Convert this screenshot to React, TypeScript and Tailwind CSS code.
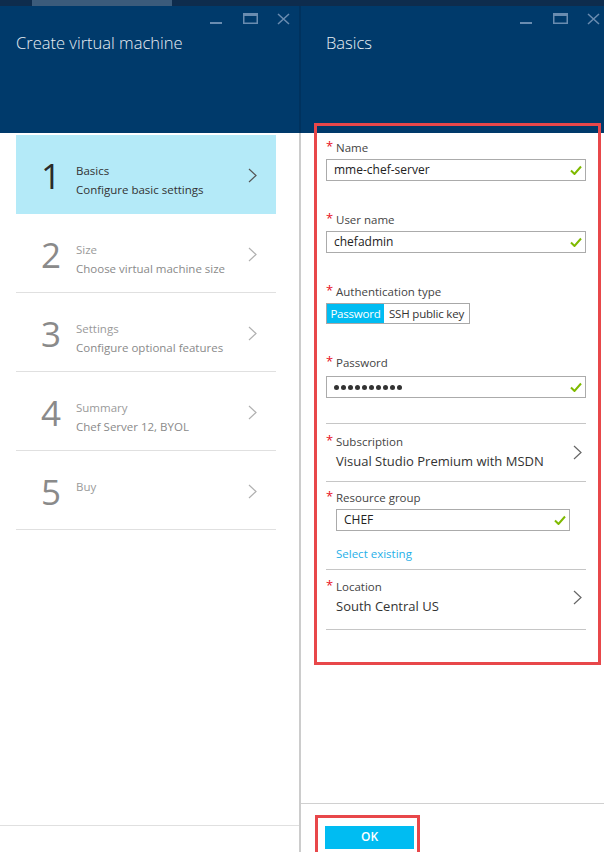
import React from 'react'

const steps = [
  { n: '1', title: 'Basics', sub: 'Configure basic settings', active: true },
  { n: '2', title: 'Size', sub: 'Choose virtual machine size' },
  { n: '3', title: 'Settings', sub: 'Configure optional features' },
  { n: '4', title: 'Summary', sub: 'Chef Server 12, BYOL' },
  { n: '5', title: 'Buy', sub: '' },
]

function WindowControls() {
  return (
    <svg width="80" height="12" viewBox="0 0 80 12" fill="none" stroke="#6a8cb0">
      <line x1="0" y1="10" x2="12" y2="10" strokeWidth="2" />
      <rect x="33.75" y="0.75" width="13.5" height="9.5" strokeWidth="1.5" />
      <line x1="33" y1="1.5" x2="48" y2="1.5" strokeWidth="3" />
      <path d="M68 1 L79 11 M79 1 L68 11" strokeWidth="1.5" />
    </svg>
  )
}

function Chevron({ color }: { color: string }) {
  return (
    <svg width="9" height="15" viewBox="0 0 9 15">
      <path d="M1 1 L8 7.5 L1 14" fill="none" stroke={color} strokeWidth="1.2" />
    </svg>
  )
}

function Check() {
  return (
    <svg width="12" height="10" viewBox="0 0 12 10">
      <path d="M1 5.5 L4.5 9 L11 1.5" fill="none" stroke="#7fba00" strokeWidth="2" />
    </svg>
  )
}

function Label({ text }: { text: string }) {
  return (
    <div className="flex items-start h-[16px]">
      <span className="w-[10px] text-[13px] leading-[13px] text-[#e81123]">*</span>
      <span className="text-[11.5px] leading-[16px] text-[#444]">{text}</span>
    </div>
  )
}

function Field({ children }: { children: React.ReactNode }) {
  return (
    <div className="h-[22px] border border-[#ababab] flex items-center justify-between pl-[7px] pr-[3px] text-[12px] text-[#222]">
      {children}
      <Check />
    </div>
  )
}

export default function App() {
  return (
    <div className="w-[604px] h-[852px] overflow-hidden bg-white flex flex-col font-['Open_Sans','Noto_Sans',sans-serif]">
      <div className="h-[6px] bg-[#0e2c4d] flex shrink-0">
        <div className="ml-[32px] w-[140px] bg-[#3b5b7b]" />
      </div>
      <div className="flex flex-1 min-h-0">
        {/* left blade */}
        <section className="w-[299px] flex flex-col">
          <header className="h-[127px] bg-[#003a6b] flex flex-col">
            <div className="flex justify-end pt-[7px] pr-[9px]">
              <WindowControls />
            </div>
            <h1 className="pl-[16px] mt-[6px] text-[16.5px] font-light leading-[24px] text-[#e8eef4]">
              Create virtual machine
            </h1>
          </header>
          <div className="flex-1 pl-[16px] pr-[23px] pt-[2px]">
            {steps.map((s) => (
              <div
                key={s.n}
                className={`h-[79px] flex items-start border-b ${s.active ? 'bg-[#b4eaf8] border-[#b4eaf8]' : 'border-[#e0e0e0]'}`}
              >
                <span
                  className={`w-[60px] pl-[25px] pt-[23px] text-[35px] leading-[36px] ${s.active ? 'text-[#2a2a2a]' : 'text-[#8a8a8a]'}`}
                >
                  {s.n}
                </span>
                <div className="flex-1 pt-[26px] text-[11.5px] leading-[19px]">
                  <div className={s.active ? 'text-[#333]' : 'text-[#9a9a9a]'}>{s.title}</div>
                  <div className={s.active ? 'text-[#333]' : 'text-[#8a8a8a]'}>{s.sub}</div>
                </div>
                <div className="pt-[33px] pr-[19px]">
                  <Chevron color={s.active ? '#555' : '#b0b0b0'} />
                </div>
              </div>
            ))}
          </div>
          <div className="h-[27px] border-t border-[#e0e0e0]" />
        </section>

        <div className="w-[2px] flex flex-col">
          <div className="h-[127px] bg-[#00325e]" />
          <div className="flex-1 bg-[#cccccc]" />
        </div>

        {/* right blade */}
        <section className="flex-1 flex flex-col relative">
          <header className="h-[127px] bg-[#003a6b] flex flex-col">
            <div className="flex justify-end pt-[7px] pr-[4px]">
              <WindowControls />
            </div>
            <h2 className="pl-[25px] mt-[6px] text-[16.5px] font-light leading-[24px] text-[#e8eef4]">Basics</h2>
          </header>

          <div className="flex-1 pl-[25px] pr-[18px] pt-[7px]">
            <Label text="Name" />
            <div className="mt-[3px]">
              <Field>mme-chef-server</Field>
            </div>

            <div className="mt-[31px]">
              <Label text="User name" />
            </div>
            <div className="mt-[3px]">
              <Field>chefadmin</Field>
            </div>

            <div className="mt-[31px]">
              <Label text="Authentication type" />
            </div>
            <div className="mt-[3px] flex h-[21px] w-[144px] border border-[#a8a8a8] text-[11.5px] tracking-[-0.2px]">
              <span className="w-[57px] bg-[#00bcf2] text-white flex items-center justify-center">Password</span>
              <span className="flex-1 text-[#333] flex items-center justify-center">SSH public key</span>
            </div>

            <div className="mt-[31px]">
              <Label text="Password" />
            </div>
            <div className="mt-[5px]">
              <Field>
                <span className="flex gap-[2px]">
                  {Array.from({ length: 10 }).map((_, i) => (
                    <span key={i} className="w-[5px] h-[5px] rounded-full bg-[#333]" />
                  ))}
                </span>
              </Field>
            </div>

            <div className="mt-[25px] border-t border-[#c6c6c6] pt-[10px] pb-[10px] flex items-center justify-between">
              <div>
                <Label text="Subscription" />
                <div className="pl-[10px] text-[13px] leading-[20px] text-[#333] mt-[1px]">
                  Visual Studio Premium with MSDN
                </div>
              </div>
              <div className="pr-[4px]">
                <Chevron color="#666" />
              </div>
            </div>

            <div className="border-t border-[#c6c6c6] pt-[8px] pb-[7px]">
              <Label text="Resource group" />
              <div className="mt-[3px] ml-[10px] w-[234px]">
                <Field>CHEF</Field>
              </div>
              <div className="mt-[15px] ml-[10px] text-[11.5px] leading-[16px] text-[#1fb0e8]">Select existing</div>
            </div>

            <div className="border-t border-[#c6c6c6] pt-[9px] pb-[13px] flex items-center justify-between">
              <div>
                <Label text="Location" />
                <div className="pl-[10px] text-[13px] leading-[20px] text-[#333] mt-[1px]">South Central US</div>
              </div>
              <div className="pr-[4px]">
                <Chevron color="#666" />
              </div>
            </div>
            <div className="border-t border-[#c6c6c6]" />
          </div>

          <footer className="h-[49px] border-t border-[#d0d0d0] pl-[24px] pt-[19px]">
            <button className="w-[89px] h-[23px] bg-[#00bcf2] text-white text-[12px] font-semibold">OK</button>
          </footer>

          {/* annotation boxes */}
          <div className="absolute left-[13px] top-[117px] w-[287px] h-[542px] border-[3px] border-[#e8474a]" />
          <div className="absolute left-[14px] top-[809px] w-[105px] h-[45px] border-[3px] border-[#e8474a]" />
        </section>
      </div>
    </div>
  )
}
